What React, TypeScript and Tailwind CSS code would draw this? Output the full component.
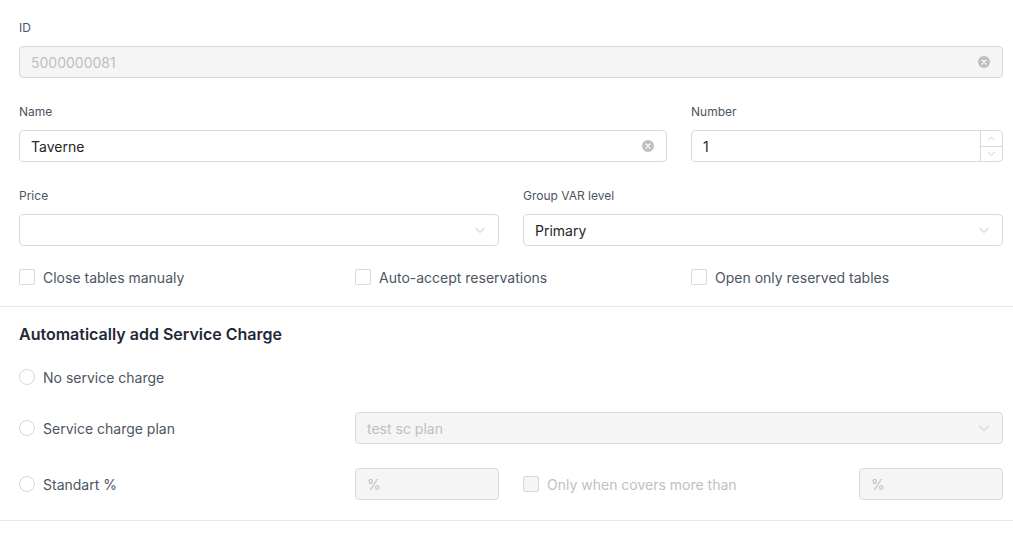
const font = { fontFamily: 'Inter, "Noto Sans", sans-serif' };

function Label({ text }: { text: string }) {
  return <div className="text-[12px] leading-[18px] text-[#4b5563] mt-px mb-[9px]">{text}</div>;
}

function ClearIcon() {
  return (
    <svg width="12" height="12" viewBox="0 0 12 12" className="shrink-0">
      <circle cx="6" cy="6" r="6" fill="#bfbfbf" />
      <path d="M4 4L8 8M8 4L4 8" stroke="#fff" strokeWidth="1.2" strokeLinecap="round" />
    </svg>
  );
}

function Chevron({ up = false, size = 12 }: { up?: boolean; size?: number }) {
  return (
    <svg width={size} height={size} viewBox="0 0 12 12" className="shrink-0">
      <path
        d={up ? 'M2 8L6 4L10 8' : 'M1.5 4L6 8.5L10.5 4'}
        fill="none"
        stroke="#bfbfbf"
        strokeWidth="1"
      />
    </svg>
  );
}

function TextInput({ value, disabled, clear }: { value: string; disabled?: boolean; clear?: boolean }) {
  return (
    <div
      className={`h-8 flex items-center rounded-[4px] border border-[#d9d9d9] pl-[11px] pr-[12px] text-[14px] ${
        disabled ? 'bg-[#f5f5f5] text-[#bfbfbf]' : 'bg-white text-[#262626]'
      }`}
    >
      <span className="flex-1 truncate">{value}</span>
      {clear && <ClearIcon />}
    </div>
  );
}

function SelectBox({ value, disabled }: { value: string; disabled?: boolean }) {
  return (
    <div
      className={`h-8 flex items-center rounded-[4px] border border-[#d9d9d9] pl-[11px] pr-[12px] text-[14px] ${
        disabled ? 'bg-[#f5f5f5] text-[#bfbfbf]' : 'bg-white text-[#262626]'
      }`}
    >
      <span className="flex-1 truncate">{value}</span>
      <Chevron />
    </div>
  );
}

function NumberInput({ value }: { value: string }) {
  return (
    <div className="h-8 flex items-stretch rounded-[4px] border border-[#d9d9d9] bg-white text-[14px] text-[#262626]">
      <span className="flex-1 flex items-center pl-[11px]">{value}</span>
      <div className="w-[22px] flex flex-col border-l border-[#d9d9d9]">
        <div className="flex-1 flex items-center justify-center border-b border-[#d9d9d9]">
          <Chevron up size={9} />
        </div>
        <div className="flex-1 flex items-center justify-center">
          <Chevron size={9} />
        </div>
      </div>
    </div>
  );
}

function Checkbox({ text, disabled }: { text: string; disabled?: boolean }) {
  return (
    <div className="flex items-center gap-2 h-[22px] text-[14px]">
      <span
        className={`w-4 h-4 rounded-[2px] border border-[#d9d9d9] ${disabled ? 'bg-[#f5f5f5]' : 'bg-white'}`}
      />
      <span className={disabled ? 'text-[#bfbfbf]' : 'text-[#4b5563]'}>{text}</span>
    </div>
  );
}

function Radio({ text }: { text: string }) {
  return (
    <div className="flex items-center gap-2 h-[22px] text-[14px] text-[#4b5563]">
      <span className="w-4 h-4 rounded-full border border-[#d9d9d9] bg-white" />
      <span>{text}</span>
    </div>
  );
}

const grid = 'grid grid-cols-[repeat(24,minmax(0,1fr))] gap-x-6';

export default function App() {
  return (
    <div className="w-[1013px] h-[535px] bg-white overflow-hidden" style={font}>
      <div className="pl-[19px] pr-[10px] pt-[18px]">
        <Label text="ID" />
        <TextInput value="5000000081" disabled clear />

        <div className={`${grid} mt-6`}>
          <div className="col-span-16">
            <Label text="Name" />
            <TextInput value="Taverne" clear />
          </div>
          <div className="col-span-8">
            <Label text="Number" />
            <NumberInput value="1" />
          </div>
        </div>

        <div className={`${grid} mt-6`}>
          <div className="col-span-12">
            <Label text="Price" />
            <SelectBox value="" />
          </div>
          <div className="col-span-12">
            <Label text="Group VAR level" />
            <SelectBox value="Primary" />
          </div>
        </div>

        <div className={`${grid} mt-[20px]`}>
          <div className="col-span-8">
            <Checkbox text="Close tables manualy" />
          </div>
          <div className="col-span-8">
            <Checkbox text="Auto-accept reservations" />
          </div>
          <div className="col-span-8">
            <Checkbox text="Open only reserved tables" />
          </div>
        </div>
      </div>

      <div className="h-px bg-[#e8e8e8] mt-[18px]" />

      <div className="pl-[19px] pr-[10px] pt-[15px]">
        <h2 className="text-[16px] leading-6 font-semibold text-[#1f2937]">Automatically add Service Charge</h2>

        <div className="mt-[20px]">
          <Radio text="No service charge" />
        </div>

        <div className={`${grid} mt-6 items-center`}>
          <div className="col-span-8">
            <Radio text="Service charge plan" />
          </div>
          <div className="col-span-16">
            <SelectBox value="test sc plan" disabled />
          </div>
        </div>

        <div className={`${grid} mt-6 items-center`}>
          <div className="col-span-8">
            <Radio text="Standart %" />
          </div>
          <div className="col-span-4">
            <TextInput value="%" disabled />
          </div>
          <div className="col-span-8">
            <Checkbox text="Only when covers more than" disabled />
          </div>
          <div className="col-span-4">
            <TextInput value="%" disabled />
          </div>
        </div>
      </div>

      <div className="h-px bg-[#e8e8e8] mt-[20px]" />
    </div>
  );
}
